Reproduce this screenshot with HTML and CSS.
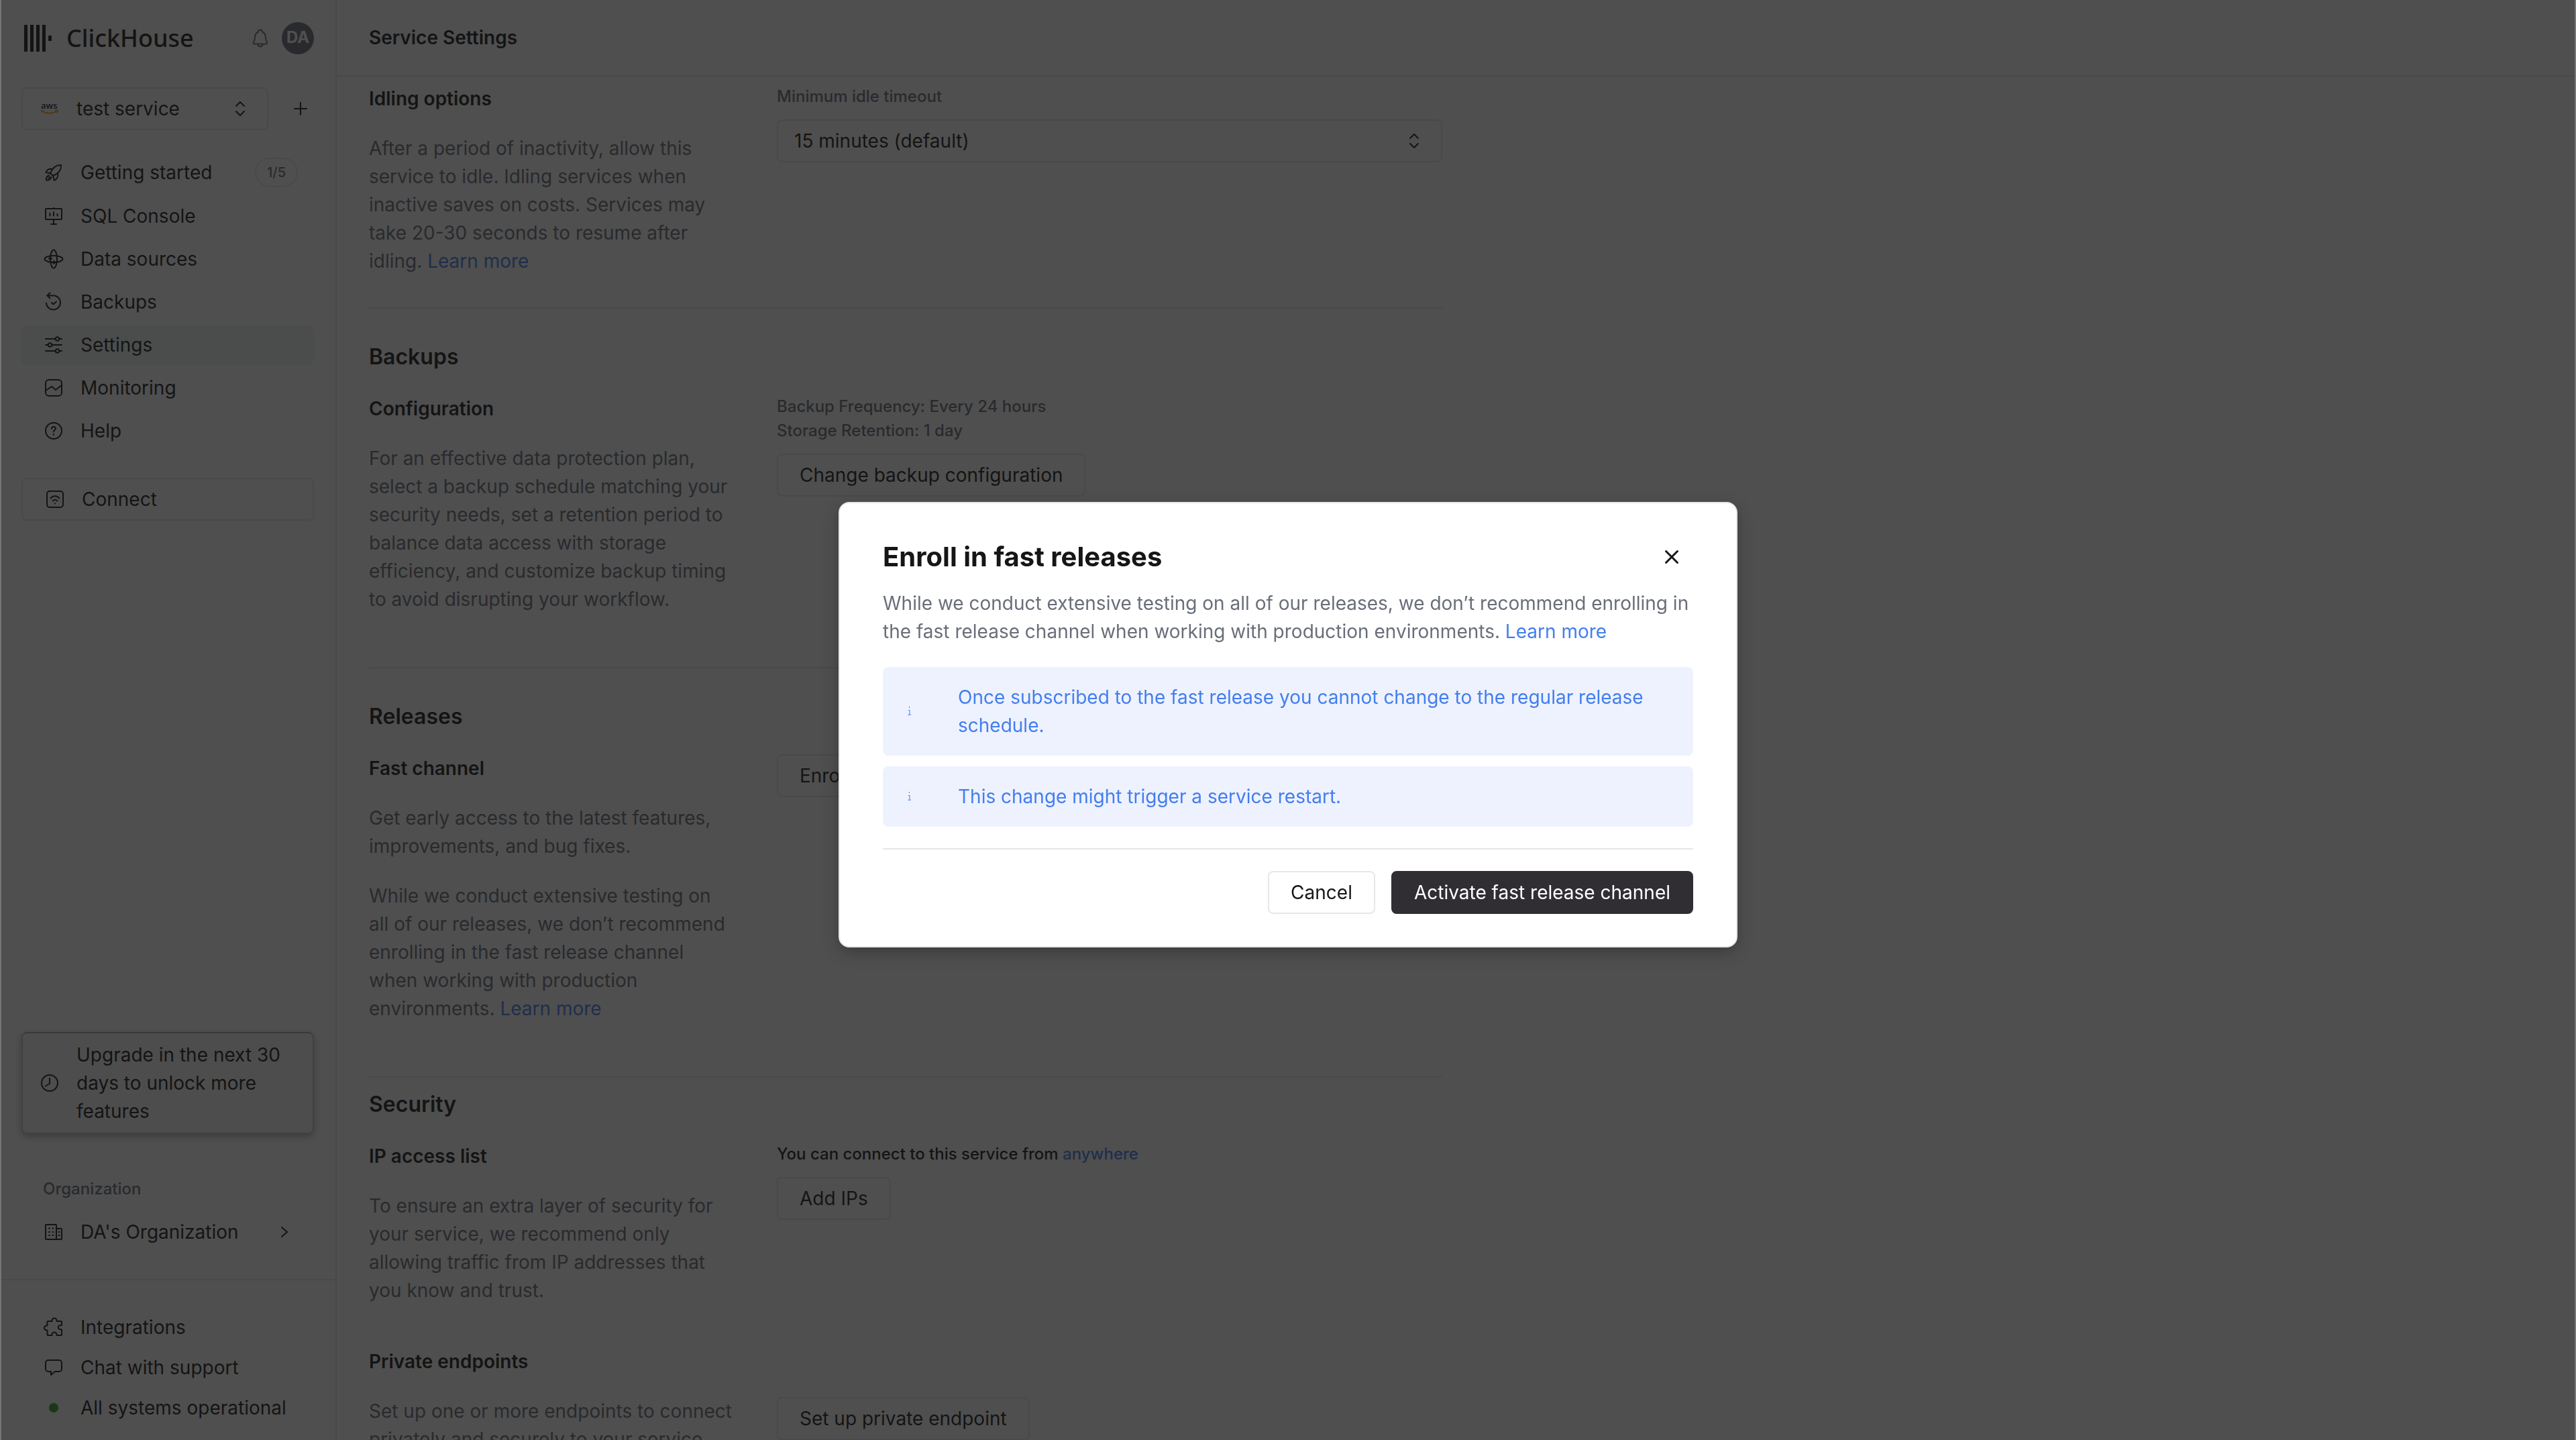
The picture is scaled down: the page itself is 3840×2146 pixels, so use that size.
FILE: index.html
```html
<!DOCTYPE html>
<html lang="en">
<head>
<meta charset="utf-8">
<title>Service Settings - ClickHouse</title>
<link rel="stylesheet" href="styles.css">
</head>
<body>
<div class="app">
  <aside class="sidebar">
    <div class="brand">
      <svg class="brand-mark" viewBox="0 0 42 42"><path d="M1 1h5v40H1zM10 1h5v40h-5zM19 1h5v40h-5zM28 1h5v40h-5zM37 17h5v8h-5z" fill="currentColor"/></svg>
      <span class="brand-name">ClickHouse</span>
      <button class="bell" aria-label="Notifications"><svg class="icon" viewBox="0 0 32 32"><path d="M13 6.500a3 3 0 0 1 6 0c3.500 1.500 5 4 5 8 0 4 .5 5 2 7 .8 1.200 0 3-1.500 3h-17c-1.500 0-2.300-1.800-1.500-3 1.500-2 2-3 2-7 0-4 1.500-6.500 5-8zM12.500 25c0 4.500 7 4.500 7 0"/></svg></button>
      <span class="avatar">DA</span>
    </div>
    <div class="service-row">
      <button class="service-select">
        <svg class="aws" viewBox="0 0 28 28"><text x="1" y="14" class="aws-text">aws</text><path d="M1 16.500c7 5 17 5.500 23 1.500M22 16.500c2-.6 4-.6 4 0s-.3 2.500-1.500 3.500" fill="none" stroke="#ff9900" stroke-width="1.700"/></svg>
        <span class="grow">test service</span>
        <svg class="icon" viewBox="0 0 32 32"><path d="M10 12l6-6 6 6M10 20l6 6 6-6"/></svg>
      </button>
      <button class="add" aria-label="New service"><svg class="icon" viewBox="0 0 32 32"><path d="M16 7v18M7 16h18"/></svg></button>
    </div>
    <nav class="nav">
      <a class="nav-item" href="#"><svg class="icon" viewBox="0 0 32 32"><path d="M11 17c3-7 8-12.500 16-12 .6 8-5 13-12 16zM11 17l4 4M14 11c-5-1-8 1-9.500 5l6.500 1.500M22 17c1 5 0 8-5 11l-2-7M9 20.500c-3 1-4.500 3.500-4 7 3.500.5 6-1 7.500-4M10.500 22.500l-2 2"/></svg><span class="grow">Getting started</span><span class="badge">1/5</span></a>
      <a class="nav-item" href="#"><svg class="icon" viewBox="0 0 32 32"><path d="M5 5h22a1 1 0 0 1 1 1v14a1 1 0 0 1-1 1H5a1 1 0 0 1-1-1V6a1 1 0 0 1 1-1zM16 21v7M12 28h8M10.500 12v3.500M16 10v5.500M21.500 13v2.500M16 4v1"/></svg><span>SQL Console</span></a>
      <a class="nav-item" href="#"><svg class="icon" viewBox="0 0 32 32"><ellipse cx="16" cy="16" rx="13.500" ry="5"/><ellipse cx="16" cy="16" rx="5" ry="13.500"/><path d="M11 12v5M9 15l2 2 2-2M13 21h5M16 19l2 2-2 2"/></svg><span>Data sources</span></a>
      <a class="nav-item" href="#"><svg class="icon" viewBox="0 0 32 32"><path d="M6 6.500h10a10.500 10.500 0 1 1-11 11M10.500 2.500l-4 4 4 4M13 17l2.500 2.500 4.500-4"/></svg><span>Backups</span></a>
      <a class="nav-item active" href="#"><svg class="icon" viewBox="0 0 32 32"><path d="M4 7h14.500M24.500 7H28M4 16h3.500M13.500 16H28M4 25h14.500M24.500 25H28"/><circle cx="21.500" cy="7" r="2.800"/><circle cx="10.500" cy="16" r="2.800"/><circle cx="21.500" cy="25" r="2.800"/></svg><span>Settings</span></a>
      <a class="nav-item" href="#"><svg class="icon" viewBox="0 0 32 32"><rect x="4" y="4" width="24" height="24" rx="5"/><path d="M4 20l9-6 6 5 9-7"/></svg><span>Monitoring</span></a>
      <a class="nav-item" href="#"><svg class="icon" viewBox="0 0 32 32"><circle cx="16" cy="16" r="12"/><path d="M13 13c0-4 6-4 6-.5 0 2-3 2.500-3 5M16 21v1"/></svg><span>Help</span></a>
    </nav>
    <button class="connect"><svg class="icon" viewBox="0 0 32 32"><rect x="4" y="4" width="24" height="24" rx="4"/><path d="M9.500 14.500c4-4.500 9-4.500 13 0M12.500 18.500c2.500-2.500 4.500-2.500 7 0M16 22v.5"/></svg><span>Connect</span></button>
    <div class="side-bottom">
      <button class="upgrade"><svg class="icon" viewBox="0 0 32 32"><circle cx="16" cy="16" r="12"/><path d="M16 9v8l-6 3.500"/></svg><span>Upgrade in the next 30 days to unlock more features</span></button>
      <div class="org-label">Organization</div>
      <a class="nav-item" href="#"><svg class="icon" viewBox="0 0 32 32"><path d="M5 5h14a1 1 0 0 1 1 1v21H5a1 1 0 0 1-1-1V6a1 1 0 0 1 1-1zM20 11h7a1 1 0 0 1 1 1v14a1 1 0 0 1-1 1h-7"/><path d="M9 10.500h1M14.500 10.500h1M9 16h1M14.500 16h1M9 21h1M14.500 21h1M23.500 16h1M23.500 21h1"/></svg><span class="grow">DA's Organization</span><svg class="icon" viewBox="0 0 32 32"><path d="M8 9l8 7-8 7"/></svg></a>
    </div>
    <div class="side-footer">
      <a class="nav-item" href="#"><svg class="icon" viewBox="0 0 32 32"><path d="M7.500 7h6c-1-6 8-6 7 0H27a1 1 0 0 1 1 1v5c-7-1-7 7 0 6.500V27a1 1 0 0 1-1 1h-6.500c1-6-8-6-7 0h-6a1 1 0 0 1-1-1v-6.500c-6 0-6-7 0-7V8a1 1 0 0 1 1-1z"/></svg><span>Integrations</span></a>
      <a class="nav-item" href="#"><svg class="icon" viewBox="0 0 32 32"><path d="M8 5h16a4 4 0 0 1 4 4v9a4 4 0 0 1-4 4h-6l-6 5v-5H8a4 4 0 0 1-4-4V9a4 4 0 0 1 4-4z"/></svg><span>Chat with support</span></a>
      <a class="nav-item" href="#"><span class="status"></span><span>All systems operational</span></a>
    </div>
  </aside>
  <div class="content">
    <header class="header"><h1>Service Settings</h1></header>
    <main class="main">
      <section class="section">
        <div class="row">
          <div class="about">
            <h3>Idling options</h3>
            <p>After a period of inactivity, allow this service to idle. Idling services when inactive saves on costs. Services may take 20-30 seconds to resume after idling. <a href="#">Learn more</a></p>
          </div>
          <div class="control">
            <label class="caption" for="idle">Minimum idle timeout</label>
            <div class="select-wrap">
              <select id="idle"><option>15 minutes (default)</option></select>
              <svg class="icon select-icon" viewBox="0 0 32 32"><path d="M10 12l6-6 6 6M10 20l6 6 6-6"/></svg>
            </div>
          </div>
        </div>
      </section>
      <section class="section tall">
        <h2>Backups</h2>
        <div class="row">
          <div class="about">
            <h3>Configuration</h3>
            <p>For an effective data protection plan, select a backup schedule matching your security needs, set a retention period to balance data access with storage efficiency, and customize backup timing to avoid disrupting your workflow.</p>
          </div>
          <div class="control">
            <div class="caption">Backup Frequency: Every 24 hours<br>Storage Retention: 1 day</div>
            <button class="btn">Change backup configuration</button>
          </div>
        </div>
      </section>
      <section class="section tall">
        <h2>Releases</h2>
        <div class="row">
          <div class="about">
            <h3>Fast channel</h3>
            <p>Get early access to the latest features, improvements, and bug fixes.</p>
            <p>While we conduct extensive testing on all of our releases, we don’t recommend enrolling in the fast release channel when working with production environments. <a href="#">Learn more</a></p>
          </div>
          <div class="control"><button class="btn">Enroll in fast releases</button></div>
        </div>
      </section>
      <section class="section security">
        <h2>Security</h2>
        <div class="row">
          <div class="about">
            <h3>IP access list</h3>
            <p>To ensure an extra layer of security for your service, we recommend only allowing traffic from IP addresses that you know and trust.</p>
          </div>
          <div class="control">
            <div class="caption dark">You can connect to this service from <a href="#">anywhere</a></div>
            <button class="btn">Add IPs</button>
          </div>
        </div>
        <div class="endpoints">
          <h3>Private endpoints</h3>
          <div class="row">
            <p>Set up one or more endpoints to connect privately and securely to your service.</p>
            <div class="control"><button class="btn">Set up private endpoint</button></div>
          </div>
        </div>
      </section>
    </main>
  </div>
</div>
<div class="overlay">
  <div class="modal" role="dialog" aria-modal="true" aria-labelledby="modal-title">
    <div class="modal-head">
      <h2 id="modal-title">Enroll in fast releases</h2>
      <button class="close" aria-label="Close"><svg class="icon" viewBox="0 0 32 32"><path d="M7.500 7.500l17 17M24.500 7.500l-17 17"/></svg></button>
    </div>
    <p class="modal-text">While we conduct extensive testing on all of our releases, we don’t recommend enrolling in the fast release channel when working with production environments. <a href="#">Learn more</a></p>
    <div class="alerts">
      <div class="alert"><svg class="info" viewBox="0 0 16 32"><path d="M7.500 9v2M6 14.500h2v6.500M5.500 21.200h4.500"/></svg><span>Once subscribed to the fast release you cannot change to the regular release schedule.</span></div>
      <div class="alert"><svg class="info" viewBox="0 0 16 32"><path d="M7.500 9v2M6 14.500h2v6.500M5.500 21.200h4.500"/></svg><span>This change might trigger a service restart.</span></div>
    </div>
    <div class="modal-actions">
      <button class="btn">Cancel</button>
      <button class="btn primary">Activate fast release channel</button>
    </div>
  </div>
</div>
</body>
</html>
```
FILE: styles.css
```css
* { box-sizing: border-box; }
body {
  margin: 0;
  font-family: Inter, "Liberation Sans", sans-serif;
  font-size: 28px;
  line-height: 42px;
  color: #161517;
  background: #fff;
}
h1, h2, h3, p { margin: 0; }
h1, h3 { font-size: 28px; line-height: 42px; font-weight: 600; }
h2 { font-size: 32px; line-height: 48px; font-weight: 600; }
a { color: #437eef; text-decoration: none; }
button, select { font: inherit; color: inherit; background: none; border: 0; padding: 0; margin: 0; text-align: left; }
.icon {
  width: 32px;
  height: 32px;
  flex: none;
  fill: none;
  stroke: currentColor;
  stroke-width: 2;
  stroke-linecap: round;
  stroke-linejoin: round;
}
.grow { flex: 1; }

.app { display: flex; height: 100vh; overflow: hidden; }

.sidebar {
  display: flex;
  flex-direction: column;
  flex: none;
  width: 502px;
  border-left: 2px solid #fff;
  border-right: 2px solid #e6e7e9;
}
.brand { display: flex; align-items: center; padding: 33px 32px 0 33px; height: 81px; }
.brand-mark { width: 42px; height: 42px; }
.brand-name { flex: 1; padding-left: 22px; font-family: "Noto Sans", sans-serif; font-size: 36px; font-weight: 500; }
.bell { display: flex; color: #696e79; margin-right: 16px; }
.avatar {
  width: 48px;
  height: 48px;
  border-radius: 50%;
  background: #696e79;
  color: #fff;
  font-size: 24px;
  font-weight: 700;
  line-height: 46px;
  text-align: center;
}
.service-row { display: flex; align-items: center; gap: 32px; padding: 49px 36px 0 30px; }
.service-select {
  display: flex;
  align-items: center;
  flex: 1;
  height: 64px;
  padding: 0 24px 0 26px;
  border: 2px solid #e6e7e9;
  border-radius: 8px;
}
.aws { width: 28px; height: 28px; margin-right: 26px; }
.aws-text { font-family: "Open Sans", sans-serif; font-size: 13px; font-weight: 600; fill: currentColor; }
.add { display: flex; }

.nav { display: flex; flex-direction: column; gap: 4px; padding: 32px 32px 0 30px; }
.nav-item {
  display: flex;
  align-items: center;
  gap: 24px;
  padding: 9px 24px 9px 32px;
  border-radius: 8px;
  color: #161517;
}
.nav-item.active { background: #f0f7f3; }
.badge {
  height: 44px;
  padding: 0 16px;
  border: 2px solid #e6e7e9;
  border-radius: 22px;
  color: #696e79;
  font-size: 20px;
  font-weight: 500;
  line-height: 40px;
}
.connect {
  display: flex;
  align-items: center;
  gap: 24px;
  height: 64px;
  margin: 40px 32px 0 30px;
  padding: 0 32px;
  border: 2px solid #e6e7e9;
  border-radius: 8px;
}
.side-bottom { margin: auto 32px 40px 30px; }
.upgrade {
  display: flex;
  align-items: center;
  gap: 24px;
  width: 100%;
  padding: 11px 24px;
  border: 2px solid #c8c8c8;
  border-top-color: #a8a8a8;
  border-radius: 8px;
  background: #f5f5f5;
  box-shadow: 0 4px 12px rgba(0, 0, 0, .3);
}
.org-label { padding: 64px 32px 16px; color: #696e79; font-size: 24px; line-height: 36px; font-weight: 500; }
.side-footer { padding: 40px 32px 18px 30px; border-top: 2px solid #e6e7e9; }
.status { width: 14px; height: 14px; margin: 0 9px; border-radius: 50%; background: #2ca02c; }

.content { display: flex; flex-direction: column; flex: 1; min-width: 0; }
.header { flex: none; padding: 35px 48px; border-bottom: 2px solid #e6e7e9; }
.main { flex: 1; min-height: 0; padding: 12px 48px 0; overflow: hidden; }
.section { max-width: 1600px; padding-bottom: 48px; margin-bottom: 48px; border-bottom: 2px solid #e6e7e9; }
.section.tall { padding-bottom: 80px; }
.section.tall:has(+ .security) { margin-bottom: 16px; }
.section.security { border-bottom: 0; }
h2 + .row { margin-top: 32px; }
.row { display: grid; grid-template-columns: 544px 1fr; column-gap: 64px; align-items: start; }
.about { display: grid; gap: 32px; }
.row p { color: #696e79; }
.control { display: flex; flex-direction: column; align-items: flex-start; gap: 16px; }
.caption { color: #696e79; font-size: 24px; line-height: 36px; font-weight: 500; }
.caption.dark { color: #161517; }
.select-wrap { position: relative; width: 100%; height: 64px; }
.select-wrap select {
  appearance: none;
  width: 100%;
  height: 64px;
  padding: 0 24px;
  border: 2px solid #e6e7e9;
  border-radius: 8px;
}
.select-icon { position: absolute; right: 26px; top: 16px; }
.endpoints { display: grid; gap: 32px; margin-top: 64px; }
.btn {
  height: 64px;
  padding: 0 32px;
  border: 2px solid #e6e7e9;
  border-radius: 8px;
  white-space: nowrap;
}

.overlay {
  position: fixed;
  inset: 0;
  display: flex;
  align-items: center;
  justify-content: center;
  padding-top: 14px;
  border: solid #767676;
  border-width: 0 2px;
  background: rgba(20, 20, 20, .75);
}
.modal {
  width: 1340px;
  max-width: 100%;
  padding: 48px 64px;
  border: 2px solid #e6e7e9;
  border-radius: 16px;
  background: #fff;
  box-shadow: 0 8px 24px rgba(0, 0, 0, .25);
}
.modal-head { display: flex; align-items: center; justify-content: space-between; height: 64px; }
.modal-head h2 { font-size: 40px; font-weight: 700; }
.close { display: flex; padding: 16px; }
.close .icon { stroke-width: 3; }
.modal-text { margin-top: 16px; color: #696e79; }
.alerts { display: grid; gap: 16px; margin: 32px 0; }
.alert {
  display: flex;
  align-items: center;
  gap: 64px;
  padding: 24px 32px;
  border-radius: 8px;
  background: #eef2fe;
  color: #437eef;
}
.info { flex: none; width: 16px; height: 32px; fill: none; stroke: currentColor; stroke-width: 1; }
.modal-actions { display: flex; justify-content: flex-end; gap: 24px; padding-top: 32px; border-top: 2px solid #e6e7e9; }
.btn.primary { border-color: #302e32; background: #302e32; color: #fff; }
```
